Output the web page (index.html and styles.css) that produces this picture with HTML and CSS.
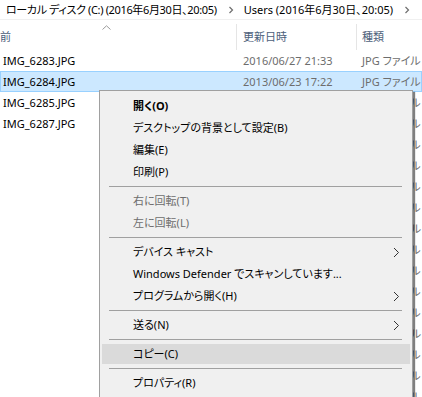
FILE: index.html
```html
<!DOCTYPE html>
<html lang="ja">
<head>
<meta charset="utf-8">
<link rel="stylesheet" href="styles.css">
</head>
<body>
<div class="explorer">
  <div class="crumbs">
    <span class="crumb tight">ローカル ディスク (C:) (2016年6月30日、20:05)</span>
    <svg class="crumb-sep" width="6" height="8" viewBox="0 0 6 8"><polyline points="1.5,1 4.5,4 1.5,7" fill="none" stroke="#6e6e6e" stroke-width="1.2"/></svg>
    <span class="crumb">Users (2016年6月30日、20:05)</span>
    <svg class="crumb-sep" width="6" height="8" viewBox="0 0 6 8"><polyline points="1.5,1 4.5,4 1.5,7" fill="none" stroke="#6e6e6e" stroke-width="1.2"/></svg>
  </div>
  <div class="head">
    <div class="hcell hname"><span class="hname-text">名前</span>
      <svg class="sort" width="9" height="5" viewBox="0 0 9 5"><polyline points="0.5,4.5 4.5,0.8 8.5,4.5" fill="none" stroke="#9a9a9a" stroke-width="1"/></svg>
    </div>
    <div class="hcell hdate">更新日時</div>
    <div class="hcell htype">種類</div>
  </div>
  <div class="rows">
    <div class="row"><span class="c-name">IMG_6283.JPG</span><span class="c-date">2016/06/27 21:33</span><span class="c-type">JPG ファイル</span></div>
    <div class="row selected"><span class="c-name">IMG_6284.JPG</span><span class="c-date">2013/06/23 17:22</span><span class="c-type">JPG ファイル</span></div>
    <div class="row"><span class="c-name">IMG_6285.JPG</span><span class="c-date">2013/06/23 17:22</span><span class="c-type">JPG ファイル</span></div>
    <div class="row"><span class="c-name">IMG_6287.JPG</span><span class="c-date">2013/06/23 17:22</span><span class="c-type">JPG ファイル</span></div>
    <div class="row"><span class="c-name"></span><span class="c-date"></span><span class="c-type">JPG ファイル</span></div>
    <div class="row"><span class="c-name"></span><span class="c-date"></span><span class="c-type">JPG ファイル</span></div>
    <div class="row"><span class="c-name"></span><span class="c-date"></span><span class="c-type">JPG ファイル</span></div>
    <div class="row"><span class="c-name"></span><span class="c-date"></span><span class="c-type">JPG ファイル</span></div>
    <div class="row"><span class="c-name"></span><span class="c-date"></span><span class="c-type">JPEG ファイル</span></div>
    <div class="row"><span class="c-name"></span><span class="c-date"></span><span class="c-type">JPG ファイル</span></div>
    <div class="row"><span class="c-name"></span><span class="c-date"></span><span class="c-type">JPG ファイル</span></div>
    <div class="row"><span class="c-name"></span><span class="c-date"></span><span class="c-type">JPG ファイル</span></div>
    <div class="row"><span class="c-name"></span><span class="c-date"></span><span class="c-type">JPG ファイル</span></div>
    <div class="row"><span class="c-name"></span><span class="c-date"></span><span class="c-type">JPEG ファイル</span></div>
    <div class="row"><span class="c-name"></span><span class="c-date"></span><span class="c-type">JPG ファイル</span></div>
    <div class="row"><span class="c-name"></span><span class="c-date"></span><span class="c-type">JPG ファイル</span></div>
    <div class="row"><span class="c-name"></span><span class="c-date"></span><span class="c-type">JPG ファイル</span></div>
  </div>
</div>

<div class="menu">
  <div class="item default">開く(O)</div>
  <div class="item">デスクトップの背景として設定(B)</div>
  <div class="item">編集(E)</div>
  <div class="item">印刷(P)</div>
  <div class="sep"></div>
  <div class="item disabled">右に回転(T)</div>
  <div class="item disabled">左に回転(L)</div>
  <div class="sep"></div>
  <div class="item sub">デバイス キャスト<svg class="arrow" width="7" height="11" viewBox="0 0 7 11"><polyline points="1,1 5.5,5.5 1,10" fill="none" stroke="#333" stroke-width="1"/></svg></div>
  <div class="item">Windows Defender でスキャンしています...</div>
  <div class="item sub">プログラムから開く(H)<svg class="arrow" width="7" height="11" viewBox="0 0 7 11"><polyline points="1,1 5.5,5.5 1,10" fill="none" stroke="#333" stroke-width="1"/></svg></div>
  <div class="sep"></div>
  <div class="item sub">送る(N)<svg class="arrow" width="7" height="11" viewBox="0 0 7 11"><polyline points="1,1 5.5,5.5 1,10" fill="none" stroke="#333" stroke-width="1"/></svg></div>
  <div class="sep"></div>
  <div class="item hover">コピー(C)</div>
  <div class="sep"></div>
  <div class="item">プロパティ(R)</div>
</div>
</body>
</html>
```

FILE: styles.css
```css
html, body {
  margin: 0;
  padding: 0;
  background: #ffffff;
  overflow: hidden;
  width: 422px;
  height: 397px;
}

body {
  position: relative;
  font-family: "Noto Sans", "Noto Sans CJK JP", sans-serif;
  font-size: 11px;
  font-feature-settings: "palt";
  color: #000;
}

.explorer {
  width: 422px;
}

.crumbs {
  height: 19px;
  border-bottom: 1px solid #f0f0f0;
  display: flex;
  align-items: center;
  padding-left: 6px;
  white-space: nowrap;
  overflow: hidden;
  line-height: 16px;
}

.crumb {
  color: #000;
}

.crumb.tight {
  letter-spacing: -0.35px;
}

.crumb-sep {
  margin: 0 10px 0 11px;
  flex: none;
}

.head {
  display: flex;
  height: 30px;
}

.hcell {
  margin-top: 4px;
  padding-top: 5px;
  line-height: 16px;
  color: #4c607a;
  white-space: nowrap;
}

.hname {
  width: 236px;
  position: relative;
  overflow: hidden;
}

.hname-text {
  margin-left: -11px;
}

.sort {
  position: absolute;
  left: 102px;
  top: 1px;
}

.hdate {
  width: 113px;
  border-left: 1px solid #e5e5e5;
  padding-left: 6px;
}

.htype {
  flex: 1;
  border-left: 1px solid #e5e5e5;
  padding-left: 5px;
}

.rows {
  display: flex;
  flex-direction: column;
}

.row {
  display: flex;
  height: 21px;
  box-sizing: border-box;
  align-items: center;
  line-height: 16px;
  white-space: nowrap;
  border: 1px solid transparent;
}

.row.selected {
  background: #cce8ff;
  border-color: #99d1ff;
}

.c-name {
  width: 236px;
  padding-left: 2px;
  box-sizing: border-box;
  color: #000;
}

.c-date {
  width: 120px;
  padding-left: 6px;
  box-sizing: border-box;
  color: #6d6d6d;
}

.c-type {
  padding-left: 5px;
  color: #6d6d6d;
}

.menu {
  position: absolute;
  left: 99px;
  top: 90px;
  width: 312px;
  background: #f0f0f0;
  border: 1px solid #a0a0a0;
  box-shadow: 2px 2px 1px rgba(0, 0, 0, 0.5);
  padding: 4px 0 6px;
  display: flex;
  flex-direction: column;
}

.item {
  height: 20px;
  margin: 1px 2px;
  padding-left: 31px;
  display: flex;
  align-items: center;
  line-height: 16px;
  color: #000;
  white-space: nowrap;
  position: relative;
}

.item.default {
  font-weight: bold;
}

.item.disabled {
  color: #6d6d6d;
}

.item.hover {
  background: #dadada;
}

.arrow {
  position: absolute;
  right: 10px;
  top: 5px;
}

.sep {
  height: 1px;
  background: #a0a0a0;
  margin: 3px 10px 3px 9px;
}
```
